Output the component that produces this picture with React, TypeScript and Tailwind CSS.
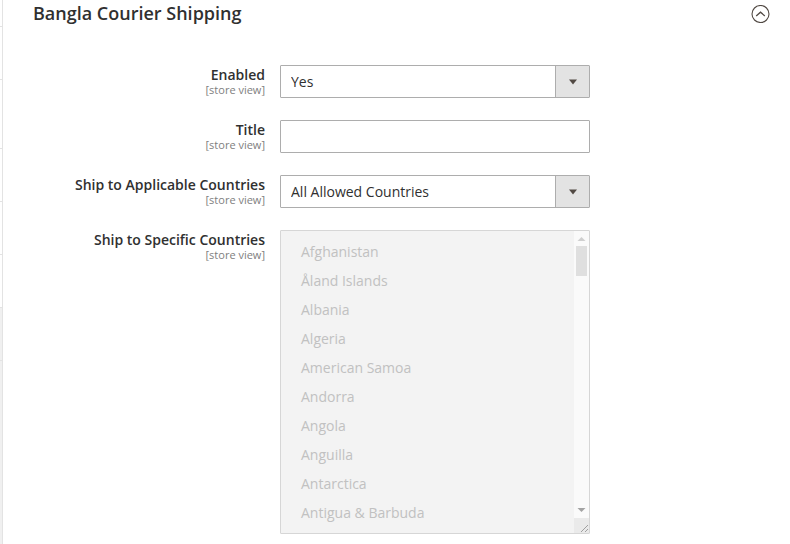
import React from "react";

const countries = [
  "Afghanistan",
  "Åland Islands",
  "Albania",
  "Algeria",
  "American Samoa",
  "Andorra",
  "Angola",
  "Anguilla",
  "Antarctica",
  "Antigua & Barbuda",
];

const menuRows = [
  { id: "r1", style: "h-[27px]" },
  { id: "r2", style: "h-[53px]" },
  { id: "r3", style: "h-[69px]" },
  { id: "r4", style: "h-[53px]" },
  { id: "r5", style: "h-[53px]" },
  { id: "r6", style: "h-[53px]" },
  { id: "r7", style: "h-[53px] bg-[#f0f0f0]" },
];

function Field({ id, label, children }: { id: string; label: string; children: React.ReactNode }) {
  return (
    <div className="flex items-start gap-[15px]">
      <label htmlFor={id} className="w-[232px] text-right text-sm leading-[19px] font-semibold">
        {label}
        <span className="block text-[11px] leading-[11px] font-normal text-[#808080]">[store view]</span>
      </label>
      {children}
    </div>
  );
}

function Dropdown({ id, options }: { id: string; options: string[] }) {
  return (
    <div className="grid h-[33px] w-[310px]">
      <select
        id={id}
        className="col-start-1 row-start-1 appearance-none rounded-[1px] border border-[#adadad] bg-white pr-10 pl-[10px] text-sm"
      >
        {options.map((o) => (
          <option key={o}>{o}</option>
        ))}
      </select>
      <span className="pointer-events-none col-start-1 row-start-1 my-px mr-px flex w-[34px] items-center justify-center justify-self-end border-l border-[#adadad] bg-[#e3e3e3]">
        <svg width="8" height="6" viewBox="0 0 8 6" aria-hidden="true">
          <path d="M0 0.5h8L4 5.5z" fill="#514943" />
        </svg>
      </span>
    </div>
  );
}

export default function App() {
  return (
    <div className="flex h-screen overflow-hidden bg-white font-['Open_Sans','Noto_Sans',sans-serif] text-[#303030]">
      <aside className="flex w-[3px] shrink-0 flex-col border-r border-[#e3e3e3]">
        {menuRows.map((r) => (
          <div key={r.id} className={`shrink-0 border-b border-[#e3e3e3] ${r.style}`} />
        ))}
        <div className="grow bg-[#f0f0f0]" />
      </aside>
      <main className="min-w-0 grow pr-5 pl-[30px]">
        <header className="flex h-7 items-start justify-between">
          <h1 className="text-lg leading-[27px] font-semibold">Bangla Courier Shipping</h1>
          <button type="button" aria-label="Collapse section" className="flex h-7 items-center">
            <svg width="19" height="18" viewBox="0 0 19 18" fill="none" stroke="#514943" aria-hidden="true">
              <circle cx="9.5" cy="9" r="8.5" strokeWidth="1.1" />
              <path d="M5.2 10.9 9.5 7.2 13.8 10.9" strokeWidth="1.3" />
            </svg>
          </button>
        </header>
        <form className="flex flex-col gap-[22px] pt-[37px]">
          <Field id="enabled" label="Enabled">
            <Dropdown id="enabled" options={["Yes", "No"]} />
          </Field>
          <Field id="title" label="Title">
            <input id="title" type="text" className="h-[33px] w-[310px] rounded-[1px] border border-[#adadad] px-[10px] text-sm" />
          </Field>
          <Field id="applicable" label="Ship to Applicable Countries">
            <Dropdown id="applicable" options={["All Allowed Countries", "Specific Countries"]} />
          </Field>
          <Field id="specific" label="Ship to Specific Countries">
            <div className="flex h-[304px] w-[310px] rounded-[1px] border border-[#d6d6d6] bg-[#f3f3f3]">
              <select
                id="specific"
                multiple
                disabled
                className="h-full min-w-0 grow overflow-hidden px-[10px] py-[6px] text-sm text-[#c1c1c1] opacity-100 [scrollbar-width:none]"
              >
                {countries.map((c) => (
                  <option key={c} className="min-h-[29px] px-[10px] py-[5px] leading-[19px] text-[#c1c1c1]">
                    {c}
                  </option>
                ))}
              </select>
              <div className="flex w-[15px] shrink-0 flex-col items-center bg-[#fafafa]" aria-hidden="true">
                <svg className="shrink-0" width="15" height="15" viewBox="0 0 15 15">
                  <path d="M3.5 10h8L7.5 6z" fill="#cfcfcf" />
                </svg>
                <div className="h-[30px] w-[11px] bg-[#dfdfdf]" />
                <div className="grow" />
                <svg className="shrink-0" width="15" height="15" viewBox="0 0 15 15">
                  <path d="M3.5 5h8L7.5 9z" fill="#a3a3a3" />
                </svg>
                <svg className="shrink-0 bg-[#eaeaea]" width="15" height="15" viewBox="0 0 15 15">
                  <path d="M7 14l7-7M11 14l3-3" stroke="#a0a0a0" />
                </svg>
              </div>
            </div>
          </Field>
        </form>
      </main>
    </div>
  );
}
